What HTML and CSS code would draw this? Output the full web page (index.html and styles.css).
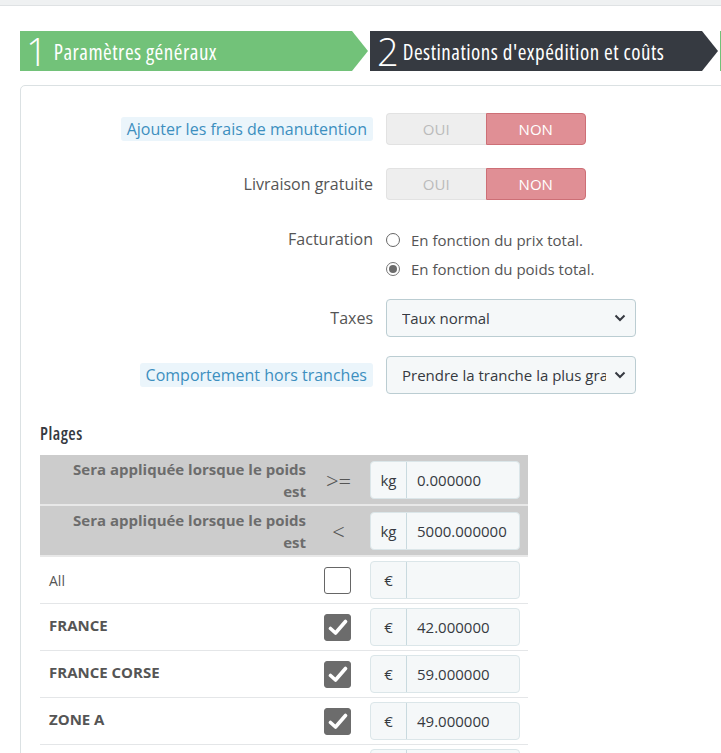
FILE: index.html
```html
<!DOCTYPE html>
<html lang="fr">
<head>
<meta charset="utf-8">
<title>Transporteur</title>
<link rel="stylesheet" href="styles.css">
</head>
<body>
<div class="topbar"></div>
<div class="page">
  <div class="steps">
    <div class="step step-done"><span class="step-num">1</span><span class="step-title">Paramètres généraux</span></div>
    <div class="step step-current"><span class="step-num">2</span><span class="step-title">Destinations d'expédition et coûts</span></div>
    <div class="step step-next"></div>
  </div>

  <div class="card">
    <div class="form-row">
      <div class="form-label"><span class="label-tip">Ajouter les frais de manutention</span></div>
      <div class="switch">
        <span class="switch-off">OUI</span>
        <span class="switch-on">NON</span>
      </div>
    </div>

    <div class="form-row row-gap">
      <div class="form-label">Livraison gratuite</div>
      <div class="switch">
        <span class="switch-off">OUI</span>
        <span class="switch-on">NON</span>
      </div>
    </div>

    <div class="form-row row-radio">
      <div class="form-label label-top">Facturation</div>
      <div class="radios">
        <label class="radio"><span class="radio-circle"></span>En fonction du prix total.</label>
        <label class="radio"><span class="radio-circle checked"></span>En fonction du poids total.</label>
      </div>
    </div>

    <div class="form-row row-taxes">
      <div class="form-label">Taxes</div>
      <div class="select"><span class="select-text">Taux normal</span><svg class="chev" width="12" height="8" viewBox="0 0 12 8"><path d="M1.5 1.5 L6 6 L10.5 1.5" fill="none" stroke="#363a41" stroke-width="2"/></svg></div>
    </div>

    <div class="form-row row-behav">
      <div class="form-label"><span class="label-tip">Comportement hors tranches</span></div>
      <div class="select"><span class="select-text">Prendre la tranche la plus grande</span><svg class="chev" width="12" height="8" viewBox="0 0 12 8"><path d="M1.5 1.5 L6 6 L10.5 1.5" fill="none" stroke="#363a41" stroke-width="2"/></svg></div>
    </div>

    <h4 class="section-title">Plages</h4>

    <div class="ranges">
      <div class="range-row head">
        <div class="cell-label">Sera appliquée lorsque le poids est</div>
        <div class="cell-mid op">&gt;=</div>
        <div class="cell-input"><div class="input-group"><span class="addon">kg</span><span class="field">0.000000</span></div></div>
      </div>
      <div class="range-row head">
        <div class="cell-label">Sera appliquée lorsque le poids est</div>
        <div class="cell-mid op">&lt;</div>
        <div class="cell-input"><div class="input-group"><span class="addon">kg</span><span class="field">5000.000000</span></div></div>
      </div>
      <div class="range-row zone">
        <div class="cell-label zone-all">All</div>
        <div class="cell-mid"><span class="check"></span></div>
        <div class="cell-input"><div class="input-group"><span class="addon">€</span><span class="field"></span></div></div>
      </div>
      <div class="range-row zone">
        <div class="cell-label zone-name">FRANCE</div>
        <div class="cell-mid"><span class="check on"><svg width="20" height="17" viewBox="0 0 20 17"><path d="M2.5 9.5 L7.5 14 L17.5 2.5" fill="none" stroke="#fff" stroke-width="3.6" stroke-linecap="round" stroke-linejoin="round"/></svg></span></div>
        <div class="cell-input"><div class="input-group"><span class="addon">€</span><span class="field">42.000000</span></div></div>
      </div>
      <div class="range-row zone">
        <div class="cell-label zone-name">FRANCE CORSE</div>
        <div class="cell-mid"><span class="check on"><svg width="20" height="17" viewBox="0 0 20 17"><path d="M2.5 9.5 L7.5 14 L17.5 2.5" fill="none" stroke="#fff" stroke-width="3.6" stroke-linecap="round" stroke-linejoin="round"/></svg></span></div>
        <div class="cell-input"><div class="input-group"><span class="addon">€</span><span class="field">59.000000</span></div></div>
      </div>
      <div class="range-row zone">
        <div class="cell-label zone-name">ZONE A</div>
        <div class="cell-mid"><span class="check on"><svg width="20" height="17" viewBox="0 0 20 17"><path d="M2.5 9.5 L7.5 14 L17.5 2.5" fill="none" stroke="#fff" stroke-width="3.6" stroke-linecap="round" stroke-linejoin="round"/></svg></span></div>
        <div class="cell-input"><div class="input-group"><span class="addon">€</span><span class="field">49.000000</span></div></div>
      </div>
      <div class="range-row zone">
        <div class="cell-label zone-name"></div>
        <div class="cell-mid"></div>
        <div class="cell-input"><div class="input-group"><span class="addon"></span><span class="field"></span></div></div>
      </div>
    </div>
  </div>
</div>
</body>
</html>
```

FILE: styles.css
```css
html, body {
  margin: 0;
  padding: 0;
  background: #fff;
  overflow: hidden;
  font-family: "Open Sans", "Liberation Sans", sans-serif;
  color: #363a41;
}

.topbar {
  height: 5px;
  background: #eff1f2;
  border-bottom: 1px solid #dfe2e4;
}

.page {
  width: 780px;
  padding: 25px 0 0 20px;
}

.steps {
  display: flex;
  height: 40px;
  gap: 2px;
}

.step {
  flex: none;
  width: 348px;
  height: 40px;
  display: flex;
  align-items: center;
  color: #fff;
  clip-path: polygon(0 0, 332px 0, 100% 50%, 332px 100%, 0 100%);
  box-sizing: border-box;
  padding-left: 6px;
  white-space: nowrap;
}

.step-done { background: #72c279; }
.step-current { background: #363a41; padding-left: 7px; }
.step-next { background: #72c279; }

.step-num {
  font-size: 38px;
  font-weight: 300;
  line-height: 40px;
  margin-right: 6px;
}

.step-current .step-num {
  margin-right: 4px;
}

.step-title {
  font-size: 21px;
  line-height: 40px;
  font-stretch: 75%;
  letter-spacing: 0.5px;
  font-weight: 400;
  padding-top: 1px;
}

.card {
  margin-top: 14px;
  border: 1px solid #dbe1e3;
  border-radius: 5px;
  padding: 27px 0 0 19px;
  height: 800px;
  box-sizing: border-box;
}

.form-row {
  display: grid;
  grid-template-columns: 352px auto;
  column-gap: 13px;
  align-items: center;
  margin-left: -19px;
}

.row-gap { margin-top: 23px; }
.row-radio { margin-top: 25px; align-items: start; }
.row-taxes { margin-top: 16px; }
.row-behav { margin-top: 19px; }

.form-label {
  justify-self: end;
  text-align: right;
  font-size: 16px;
  color: #555;
  line-height: 24px;
  padding-left: 20px;
}

.label-top { line-height: 29px; }

.label-tip {
  display: inline-block;
  background: #ebf5fb;
  color: #3d8fbf;
  border-radius: 3px;
  padding: 0 6px;
  line-height: 24px;
}

.switch {
  display: flex;
  width: 200px;
  height: 32px;
  font-size: 15px;
}

.switch-off {
  flex: 1;
  display: flex;
  align-items: center;
  justify-content: center;
  background: #eeeeee;
  color: #bbbbbb;
  border: 1px solid #e2e2e2;
  border-right: none;
  border-radius: 4px 0 0 4px;
}

.switch-on {
  flex: 1;
  display: flex;
  align-items: center;
  justify-content: center;
  background: #e08f95;
  color: #fff;
  border: 1px solid #cd6f76;
  border-radius: 0 4px 4px 0;
}

.radios {
  display: flex;
  flex-direction: column;
}

.radio {
  display: flex;
  align-items: center;
  height: 29px;
  font-size: 15px;
  color: #555;
}

.radio-circle {
  width: 12px;
  height: 12px;
  border: 1px solid #666;
  border-radius: 50%;
  margin-right: 11px;
  box-sizing: content-box;
  position: relative;
}

.radio-circle.checked {
  border-color: #777;
}

.radio-circle.checked::after {
  content: "";
  position: absolute;
  left: 2px;
  top: 2px;
  width: 8px;
  height: 8px;
  border-radius: 50%;
  background: #6c6c6c;
}

.select {
  width: 250px;
  height: 38px;
  box-sizing: border-box;
  background: #f5f8f9;
  border: 1px solid #bbcdd2;
  border-radius: 4px;
  display: flex;
  align-items: center;
  padding: 0 9px 0 15px;
  font-size: 15px;
  color: #363a41;
}

.select-text {
  flex: 1;
  white-space: nowrap;
  overflow: hidden;
  margin-right: 8px;
}

.chev { flex: none; }

.section-title {
  margin: 29px 0 0 0;
  font-size: 17px;
  font-weight: 600;
  font-stretch: 75%;
  letter-spacing: 0.5px;
  color: #363a41;
  line-height: 22px;
}

.ranges {
  margin-top: 10px;
  width: 488px;
}

.range-row {
  display: grid;
  grid-template-columns: 275px 45px 168px;
  align-items: center;
}

.range-row.head {
  background: #cccccc;
  height: 51px;
  border-bottom: 2px solid #e8e8e8;
  box-sizing: border-box;
}

.range-row.zone {
  height: 47px;
  border-bottom: 1px solid #e4e6e8;
  box-sizing: border-box;
}

.cell-label {
  font-size: 15px;
}

.head .cell-label {
  text-align: right;
  font-weight: 700;
  color: #6c6c6c;
  line-height: 22px;
  padding-left: 30px;
  padding-right: 9px;
}

.zone-all {
  padding-left: 9px;
  color: #555;
  font-size: 14px;
}

.zone-name {
  padding-left: 9px;
  font-weight: 700;
  color: #555;
  margin-top: -5px;
}

.cell-mid {
  display: flex;
  justify-content: center;
}

.op {
  font-size: 22px;
  color: #555;
  font-weight: 300;
  padding-left: 2px;
}

.cell-input {
  padding-left: 10px;
}

.input-group {
  display: flex;
  width: 150px;
  height: 38px;
  box-sizing: border-box;
  border: 1px solid #dbe6e9;
  border-radius: 4px;
  background: #f5f8f9;
  font-size: 15px;
}

.addon {
  width: 36px;
  flex: none;
  display: flex;
  align-items: center;
  justify-content: center;
  border-right: 1px solid #c9dadf;
  color: #363a41;
  box-sizing: border-box;
}

.field {
  flex: 1;
  display: flex;
  align-items: center;
  padding-left: 10px;
  color: #363a41;
}

.check {
  width: 27px;
  height: 27px;
  box-sizing: border-box;
  border: 1px solid #666;
  border-radius: 3px;
  background: #fff;
  display: flex;
  align-items: center;
  justify-content: center;
}

.check.on {
  background: #6c6c6c;
  border-color: #6c6c6c;
}
```
